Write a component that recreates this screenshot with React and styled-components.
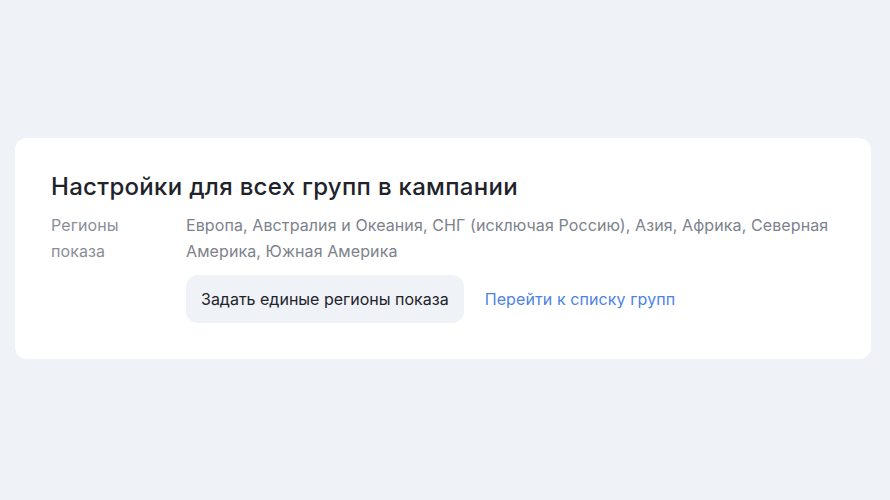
import React from 'react';
import styled, { createGlobalStyle } from 'styled-components';

const GlobalStyle = createGlobalStyle`
  html, body {
    margin: 0;
    padding: 0;
    background: #eff2f6;
    font-family: Inter, "Noto Sans", sans-serif;
  }
`;

const Page = styled.div`
  padding: 138px 19px 0 15px;
  min-height: 100vh;
  box-sizing: border-box;
`;

const Card = styled.section`
  background: #fff;
  border-radius: 12px;
  padding: 34px 36px 36px;
`;

const Title = styled.h2`
  margin: 0 0 10px;
  font-size: 24px;
  line-height: 30px;
  font-weight: 500;
  color: #21232b;
  letter-spacing: 0.3px;
`;

const Row = styled.div`
  display: grid;
  grid-template-columns: 135px 1fr;
  font-size: 16px;
  line-height: 26px;
  letter-spacing: 0.1px;
`;

const Label = styled.div`
  color: #8a8e99;
`;

const Value = styled.div`
  color: #7d828c;
`;

const Actions = styled.div`
  display: flex;
  align-items: center;
  gap: 21px;
  margin-top: 11px;
`;

const Button = styled.button`
  height: 48px;
  padding: 0 15px;
  border: 0;
  border-radius: 12px;
  background: #eff2f6;
  color: #21232b;
  font: inherit;
  font-size: 16px;
`;

const LinkText = styled.a`
  color: #4d84e4;
  font-size: 16px;
  text-decoration: none;
`;

export default function App() {
  return (
    <>
      <GlobalStyle />
      <Page>
        <Card>
          <Title>Настройки для всех групп в кампании</Title>
          <Row>
            <Label>
              Регионы
              <br />
              показа
            </Label>
            <div>
              <Value>
                Европа, Австралия и Океания, СНГ (исключая Россию), Азия, Африка, Северная Америка, Южная Америка
              </Value>
              <Actions>
                <Button type="button">Задать единые регионы показа</Button>
                <LinkText href="#">Перейти к списку групп</LinkText>
              </Actions>
            </div>
          </Row>
        </Card>
      </Page>
    </>
  );
}
